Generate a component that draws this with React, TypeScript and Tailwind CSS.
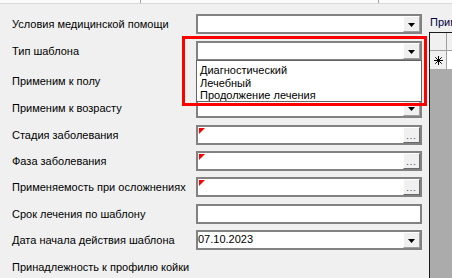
import React from "react";

type Kind = "combo" | "ellipsis" | "text" | "date" | "none";

const rows: { label: string; kind: Kind; mt: string }[] = [
    { label: "Условия медицинской помощи", kind: "combo", mt: "mt-[10px]" },
    { label: "Тип шаблона", kind: "combo", mt: "mt-[7px]" },
    { label: "Применим к полу", kind: "combo", mt: "mt-[10px]" },
    { label: "Применим к возрасту", kind: "combo", mt: "mt-[7px]" },
    { label: "Стадия заболевания", kind: "ellipsis", mt: "mt-[7px]" },
    { label: "Фаза заболевания", kind: "ellipsis", mt: "mt-[6px]" },
    { label: "Применяемость при осложнениях", kind: "ellipsis", mt: "mt-[6px]" },
    { label: "Срок лечения по шаблону", kind: "text", mt: "mt-[7px]" },
    { label: "Дата начала действия шаблона", kind: "date", mt: "mt-[6px]" },
    { label: "Принадлежность к профилю койки", kind: "none", mt: "mt-[7px]" },
];

const options = ["Диагностический", "Лечебный", "Продолжение лечения"];

const Arrow = () => (
    <div className="w-[17px] h-full bg-[#f0f0f0] border-t border-l border-t-white border-l-white border-r border-b border-r-[#a0a0a0] border-b-[#a0a0a0] flex items-center justify-center pt-[2px]">
        <svg width="7" height="4" viewBox="0 0 7 4">
            <path d="M0 0h7L3.5 4z" fill="#000" />
        </svg>
    </div>
);

const Field = ({ kind }: { kind: Kind }) => {
    if (kind === "none") return null;
    return (
        <div className="w-[226px] h-[20px] border-2 border-[#828282] bg-white flex relative">
            {kind === "ellipsis" && (
                <svg className="absolute left-[1px] top-[1px]" width="6" height="6" viewBox="0 0 6 6">
                    <path d="M0 0h6L0 6z" fill="#ff0000" />
                </svg>
            )}
            <div className="flex-1 text-[11px] leading-[13px] pt-[1px] text-black">
                {kind === "date" ? "07.10.2023" : ""}
            </div>
            {(kind === "combo" || kind === "date") && <Arrow />}
            {kind === "ellipsis" && (
                <div className="w-[17px] h-full bg-[#f0f0f0] border-t border-l border-t-white border-l-white border-r border-b border-r-[#696969] border-b-[#696969] flex items-end justify-center pb-[3px]">
                    <span className="text-[9px] leading-[6px] tracking-[1px] text-[#333]">...</span>
                </div>
            )}
        </div>
    );
};

const Asterisk = () => (
    <svg width="9" height="9" viewBox="0 0 9 9" stroke="#000" strokeWidth="1">
        <path d="M4.5 0v9M0 4.5h9M1.3 1.3l6.4 6.4M7.7 1.3l-6.4 6.4" />
    </svg>
);

export default function App() {
    return (
        <div className="w-[452px] h-[278px] bg-[#f0f0f0] relative overflow-hidden flex flex-col text-[11px] text-black font-['Liberation_Sans',Arial,sans-serif]">
            {/* tab strip bottom */}
            <div className="h-[4px] flex border-b border-[#d9d9d9] bg-[#fbfbfb]">
                <div className="w-[141px] border-r border-[#a0a0a0]" />
                <div className="w-[238px] border-r border-[#a0a0a0]" />
                <div className="flex-1" />
            </div>

            <div className="flex flex-1 min-h-0">
                <div className="w-[429px] pl-[12px] flex flex-col">
                    {rows.map((r) => (
                        <div key={r.label} className={`${r.mt} h-[20px] flex items-center`}>
                            <div className="w-[184px] whitespace-nowrap leading-[14px]">{r.label}</div>
                            <Field kind={r.kind} />
                        </div>
                    ))}
                </div>

                <div className="flex-1 flex flex-col min-w-0">
                    <div className="h-[28px] pt-[11px] pl-[1px] whitespace-nowrap overflow-hidden leading-[14px] text-[#000040]">
                        Прим
                    </div>
                    <div className="flex-1 border-l border-t border-[#1a1a1a] bg-[#ababab] flex flex-col">
                        <div className="h-[18px] bg-[#f0f0f0] border-b border-[#a0a0a0] flex">
                            <div className="w-[17px] border-r border-[#a0a0a0]" />
                            <div className="flex-1" />
                        </div>
                        <div className="h-[18px] bg-[#f0f0f0] flex">
                            <div className="w-[17px] border-r border-[#a0a0a0] flex items-center justify-center">
                                <Asterisk />
                            </div>
                            <div className="flex-1 bg-white" />
                        </div>
                    </div>
                </div>
            </div>

            {/* open dropdown list of "Тип шаблона" */}
            <div className="absolute left-[196px] top-[60px] w-[226px] h-[42px] bg-white border border-[#646464] pl-[3px] pt-[3px] text-[11px] leading-[12.5px]">
                {options.map((o) => (
                    <div key={o} className="whitespace-nowrap">{o}</div>
                ))}
            </div>

            {/* red highlight frame */}
            <div className="absolute left-[182px] top-[36px] w-[245px] h-[70px] border-[3px] border-[#ff0000]" />
        </div>
    );
}
